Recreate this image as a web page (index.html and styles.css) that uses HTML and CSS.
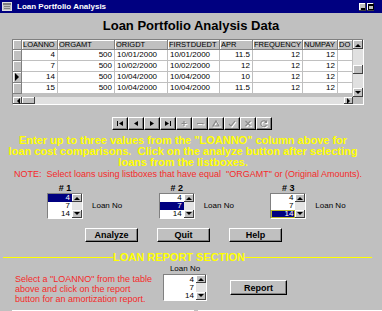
FILE: index.html
```html
<!DOCTYPE html>
<html lang="en">
<head>
    <meta charset="UTF-8">
    <meta name="viewport" content="width=device-width, initial-scale=1.0">
    <title>Loan Portfolio Analysis</title>
    <link rel="stylesheet" href="styles.css">
</head>
<body>
<div class="window">
    <div class="titlebar">
        <svg class="app-icon" width="10" height="9" viewBox="0 0 10 9">
            <rect x="0.5" y="0.5" width="9" height="8" fill="#c0c0c0" stroke="#e0e0e0"/>
            <rect x="1" y="1" width="8" height="2" fill="#808080"/>
            <rect x="2" y="4" width="6" height="1" fill="#808080"/>
            <rect x="2" y="6" width="6" height="1" fill="#808080"/>
        </svg>
        <span class="title-text">Loan Portfolio Analysis</span>
        <div class="title-buttons">
            <span class="title-btn"><svg width="6" height="6" viewBox="0 0 6 6"><rect x="1" y="4" width="4" height="2" fill="#000"/></svg></span>
            <span class="title-btn"><svg width="6" height="6" viewBox="0 0 6 6"><rect x="0.5" y="0.5" width="5" height="5" fill="none" stroke="#000"/><rect x="0" y="0" width="6" height="2" fill="#000"/></svg></span>
        </div>
    </div>

    <h1 class="heading">Loan Portfolio Analysis Data</h1>

    <div class="grid">
        <div class="cells">
            <div class="row head">
                <span class="ind"></span><span>LOANNO</span><span>ORGAMT</span><span>ORIGDT</span><span>FIRSTDUEDT</span><span>APR</span><span>FREQUENCY</span><span>NUMPAY</span><span>DO</span>
            </div>
            <div class="row">
                <span class="ind"></span><span class="num">4</span><span class="num">500</span><span>10/01/2000</span><span>10/01/2000</span><span class="num">11.5</span><span class="num">12</span><span class="num">12</span><span></span>
            </div>
            <div class="row">
                <span class="ind"></span><span class="num">7</span><span class="num">500</span><span>10/02/2000</span><span>10/02/2000</span><span class="num">12</span><span class="num">12</span><span class="num">12</span><span></span>
            </div>
            <div class="row">
                <span class="ind"><svg width="6" height="8" viewBox="0 0 6 8"><polygon points="1,0 5,4 1,8" fill="#000"/></svg></span><span class="num">14</span><span class="num">500</span><span>10/04/2000</span><span>10/04/2000</span><span class="num">10</span><span class="num">12</span><span class="num">12</span><span></span>
            </div>
            <div class="row">
                <span class="ind"></span><span class="num">15</span><span class="num">500</span><span>10/04/2000</span><span>10/04/2000</span><span class="num">11.5</span><span class="num">12</span><span class="num">12</span><span></span>
            </div>
        </div>
        <div class="vscroll">
            <span class="sbtn"><svg width="6" height="4" viewBox="0 0 6 4"><polygon points="0,4 3,1 6,4" fill="#000"/></svg></span>
            <span class="track" style="height: 16px"></span>
            <span class="sbtn thumb"></span>
            <span class="track" style="height: 14px"></span>
            <span class="sbtn"><svg width="6" height="4" viewBox="0 0 6 4"><polygon points="0,0 3,3 6,0" fill="#000"/></svg></span>
        </div>
        <div class="hscroll">
            <span class="sbtn"><svg width="4" height="6" viewBox="0 0 4 6"><polygon points="4,0 1,3 4,6" fill="#000"/></svg></span>
            <span class="sbtn thumb"></span>
            <span class="track"></span>
            <span class="sbtn"><svg width="4" height="6" viewBox="0 0 4 6"><polygon points="0,0 3,3 0,6" fill="#000"/></svg></span>
        </div>
        <div class="corner"></div>
    </div>

    <div class="navigator">
        <span class="nav-btn"><svg width="10" height="9" viewBox="0 0 10 9"><rect x="2" y="2" width="1" height="5" fill="#000"/><polygon points="8,2 8,7 4,4.5" fill="#000"/></svg></span>
        <span class="nav-btn"><svg width="10" height="9" viewBox="0 0 10 9"><polygon points="7,2 7,7 3,4.5" fill="#000"/></svg></span>
        <span class="nav-btn"><svg width="10" height="9" viewBox="0 0 10 9"><polygon points="3,2 3,7 7,4.5" fill="#000"/></svg></span>
        <span class="nav-btn"><svg width="10" height="9" viewBox="0 0 10 9"><polygon points="2,2 2,7 6,4.5" fill="#000"/><rect x="7" y="2" width="1" height="5" fill="#000"/></svg></span>
        <span class="nav-btn off"><svg width="10" height="9" viewBox="0 0 10 9"><g class="hi"><path d="M5 2v5M2.5 4.5h5"/></g><g class="lo"><path d="M5 2v5M2.5 4.5h5"/></g></svg></span>
        <span class="nav-btn off"><svg width="10" height="9" viewBox="0 0 10 9"><g class="hi"><path d="M2 4.5h6v1"/></g><g class="lo"><path d="M2 4.5h6v1"/></g></svg></span>
        <span class="nav-btn off"><svg width="10" height="9" viewBox="0 0 10 9"><g class="hi"><path d="M2 7h6L5 2z"/></g><g class="lo"><path d="M2 7h6L5 2z"/></g></svg></span>
        <span class="nav-btn off"><svg width="10" height="9" viewBox="0 0 10 9"><g class="hi"><path d="M2 5l2 2 4-5"/></g><g class="lo"><path d="M2 5l2 2 4-5"/></g></svg></span>
        <span class="nav-btn off"><svg width="10" height="9" viewBox="0 0 10 9"><g class="hi"><path d="M2.5 2l5 5M7.5 2l-5 5"/></g><g class="lo"><path d="M2.5 2l5 5M7.5 2l-5 5"/></g></svg></span>
        <span class="nav-btn off"><svg width="10" height="9" viewBox="0 0 10 9"><g class="hi"><path d="M7.5 3.5A3 3 0 1 0 7.5 6M7.5 1.5v2h-2"/></g><g class="lo"><path d="M7.5 3.5A3 3 0 1 0 7.5 6M7.5 1.5v2h-2"/></g></svg></span>
    </div>

    <p class="intro">Enter up to three values from the "LOANNO" column above for<br>loan cost comparisons.&nbsp; Click on the analyze button after selecting<br>loans from the listboxes.</p>
    <p class="note">NOTE:&nbsp; Select loans using listboxes that have equal&nbsp; "ORGAMT" or (Original Amounts).</p>

    <div class="pickers">
        <div class="picker">
            <div class="picker-col">
                <span class="picker-label"># 1</span>
                <div class="listbox">
                    <ul class="items"><li class="sel">4</li><li>7</li><li>14</li></ul>
                    <div class="lb-scroll">
                        <span class="sbtn"><svg width="6" height="4" viewBox="0 0 6 4"><polygon points="0,4 3,1 6,4" fill="#000"/></svg></span>
                        <span class="sbtn"><svg width="6" height="4" viewBox="0 0 6 4"><polygon points="0,0 3,3 6,0" fill="#000"/></svg></span>
                    </div>
                </div>
            </div>
            <span class="loan-no">Loan No</span>
        </div>
        <div class="picker">
            <div class="picker-col">
                <span class="picker-label"># 2</span>
                <div class="listbox">
                    <ul class="items"><li>4</li><li class="sel">7</li><li>14</li></ul>
                    <div class="lb-scroll">
                        <span class="sbtn"><svg width="6" height="4" viewBox="0 0 6 4"><polygon points="0,4 3,1 6,4" fill="#000"/></svg></span>
                        <span class="sbtn"><svg width="6" height="4" viewBox="0 0 6 4"><polygon points="0,0 3,3 6,0" fill="#000"/></svg></span>
                    </div>
                </div>
            </div>
            <span class="loan-no">Loan No</span>
        </div>
        <div class="picker">
            <div class="picker-col">
                <span class="picker-label"># 3</span>
                <div class="listbox">
                    <ul class="items"><li>4</li><li>7</li><li class="sel focus">14</li></ul>
                    <div class="lb-scroll">
                        <span class="sbtn"><svg width="6" height="4" viewBox="0 0 6 4"><polygon points="0,4 3,1 6,4" fill="#000"/></svg></span>
                        <span class="sbtn"><svg width="6" height="4" viewBox="0 0 6 4"><polygon points="0,0 3,3 6,0" fill="#000"/></svg></span>
                    </div>
                </div>
            </div>
            <span class="loan-no">Loan No</span>
        </div>
    </div>

    <div class="actions">
        <button class="btn">Analyze</button>
        <button class="btn">Quit</button>
        <button class="btn">Help</button>
    </div>

    <div class="section-rule">
        <span class="rule-left"></span>
        <span class="rule-text">LOAN REPORT SECTION</span>
        <span class="rule-right"></span>
    </div>

    <div class="report">
        <p class="report-text">Select a "LOANNO" from the table<br>above and click on the report<br>button for an amortization report.</p>
        <div class="report-pick">
            <span class="report-label">Loan No</span>
            <div class="listbox wide">
                <ul class="items"><li>4</li><li>7</li><li>14</li></ul>
                <div class="lb-scroll">
                    <span class="sbtn"><svg width="6" height="4" viewBox="0 0 6 4"><polygon points="0,4 3,1 6,4" fill="#000"/></svg></span>
                    <span class="sbtn"><svg width="6" height="4" viewBox="0 0 6 4"><polygon points="0,0 3,3 6,0" fill="#000"/></svg></span>
                </div>
            </div>
        </div>
        <button class="btn btn-report">Report</button>
    </div>

    <div class="panels">
        <div class="panel panel-left"></div>
        <div class="panel panel-right"></div>
    </div>
</div>
</body>
</html>
```

FILE: styles.css
```css
/* Win95 style form */
body {
    margin: 0;
    padding: 0;
    background-color: #c0c0c0;
    font-family: "Liberation Sans", Arial, sans-serif;
    overflow: hidden;
}

.window {
    width: 382px;
    height: 311px;
    overflow: hidden;
}

p {
    margin: 0;
}

/* title bar */
.titlebar {
    height: 13px;
    background-color: #000080;
    display: flex;
    align-items: center;
    padding-left: 2px;
}

.app-icon {
    display: block;
}

.title-text {
    color: #fff;
    font-weight: bold;
    font-size: 8px;
    margin-left: 5px;
}

.title-buttons {
    margin-left: auto;
    margin-right: 8px;
    display: flex;
    gap: 1px;
}

.title-btn {
    width: 7px;
    height: 8px;
    background-color: #c0c0c0;
    display: flex;
    align-items: center;
    justify-content: center;
    box-shadow: inset -1px -1px #404040, inset 1px 1px #fff;
}

.heading {
    margin: 0;
    height: 26px;
    line-height: 26px;
    font-size: 13px;
    text-align: center;
    color: #000;
}

/* data grid */
.grid {
    margin-left: 12px;
    width: 352px;
    height: 66px;
    box-sizing: border-box;
    border: 1px solid;
    border-color: #808080 #fff #fff #808080;
    display: grid;
    grid-template-columns: 340px 10px;
    grid-template-rows: 57px 7px;
    background-color: #c0c0c0;
}

.cells {
    overflow: hidden;
}

.row {
    display: grid;
    grid-template-columns: 9px 36px 57px 53px 52px 33px 50px 35px 15px;
    height: 11px;
}

.row span {
    box-sizing: border-box;
    background-color: #fff;
    border-right: 1px solid #c0c0c0;
    border-bottom: 1px solid #c0c0c0;
    padding: 0 2px;
    font-size: 8px;
    line-height: 10px;
    white-space: nowrap;
    overflow: hidden;
    color: #000;
}

.row .num {
    text-align: right;
}

.row.head {
    height: 10px;
}

.row.head span,
.row .ind {
    background-color: #c0c0c0;
    border-right-color: #808080;
    border-bottom-color: #808080;
    box-shadow: inset 1px 1px #fff;
}

.row.head span {
    font-size: 7.5px;
    line-height: 10px;
    padding: 0 0 0 1px;
}

.row .ind {
    padding: 0;
    display: flex;
    align-items: center;
    justify-content: center;
}

.vscroll {
    display: flex;
    flex-direction: column;
}

.hscroll {
    display: flex;
}

.track {
    background-color: #e0e0e0;
}

.hscroll .track {
    flex: 1;
}

.sbtn {
    box-sizing: border-box;
    background-color: #c0c0c0;
    box-shadow: inset -1px -1px #404040, inset 1px 1px #fff;
    display: flex;
    align-items: center;
    justify-content: center;
}

.vscroll .sbtn {
    height: 9px;
}

.hscroll .sbtn {
    width: 9px;
}

.hscroll .thumb {
    width: 13px;
}

.corner {
    background-color: #c0c0c0;
}

/* record navigator */
.navigator {
    margin-top: 12px;
    display: flex;
    justify-content: center;
    padding-left: 2px;
}

.nav-btn {
    width: 16px;
    height: 13px;
    box-sizing: border-box;
    background-color: #c0c0c0;
    border: 1px solid;
    border-color: #fff #000 #000 #fff;
    box-shadow: inset -1px -1px #808080;
    display: flex;
    align-items: center;
    justify-content: center;
}

.nav-btn .hi,
.nav-btn .lo {
    fill: none;
    stroke-width: 1.2;
}

.nav-btn .hi {
    stroke: #fff;
    transform: translate(1px, 1px);
}

.nav-btn .lo {
    stroke: #8a8a8a;
}

/* instructions */
.intro {
    margin-top: 5px;
    width: 366px;
    text-align: center;
    color: #ffff00;
    font-weight: bold;
    font-size: 11px;
    line-height: 11px;
    white-space: nowrap;
}

.note {
    margin-top: 1px;
    padding-left: 14px;
    color: #f52a2a;
    font-size: 9px;
    line-height: 10px;
    white-space: nowrap;
}

/* loan pickers */
.pickers {
    margin-top: 4px;
    padding-left: 47px;
    display: flex;
}

.picker {
    width: 119px;
    display: flex;
    align-items: flex-end;
}

.picker-col {
    display: flex;
    flex-direction: column;
    align-items: center;
}

.picker-label {
    font-weight: bold;
    font-size: 9px;
    line-height: 10px;
}

.loan-no {
    font-size: 8px;
    line-height: 26px;
    margin-left: 9px;
}

.listbox {
    width: 36px;
    height: 26px;
    box-sizing: border-box;
    border: 1px solid;
    border-color: #808080 #fff #fff #808080;
    background-color: #fff;
    display: flex;
}

.items {
    list-style: none;
    margin: 0;
    padding: 0;
    flex: 1;
}

.items li {
    font-size: 8px;
    line-height: 8px;
    height: 8px;
    text-align: right;
    padding-right: 2px;
}

.items li.sel {
    background-color: #000080;
    color: #fff;
}

.items li.focus {
    box-shadow: inset 0 0 0 1px #b8b830;
}

.lb-scroll {
    width: 10px;
    background-color: #e4e4e4;
    display: flex;
    flex-direction: column;
    justify-content: space-between;
}

.lb-scroll .sbtn {
    height: 8px;
}

/* buttons */
.actions {
    margin-top: 9px;
    padding-left: 85px;
    display: flex;
    gap: 19px;
}

.btn {
    width: 53px;
    height: 14px;
    padding: 0;
    box-sizing: border-box;
    background-color: #c0c0c0;
    border: 1px solid;
    border-color: #fff #000 #000 #fff;
    box-shadow: inset -1px -1px #808080;
    font-family: "Liberation Sans", Arial, sans-serif;
    font-weight: bold;
    font-size: 9px;
    color: #000;
}

/* report section */
.section-rule {
    margin-top: 10px;
    display: flex;
    align-items: center;
    padding: 0 10px 0 3px;
}

.rule-left,
.rule-right {
    height: 1px;
    background-color: #ffff00;
}

.rule-left {
    width: 110px;
}

.rule-right {
    flex: 1;
}

.rule-text {
    color: #ffff00;
    font-weight: bold;
    font-size: 11px;
    line-height: 11px;
}

.report {
    margin-top: 1px;
    display: flex;
    align-items: flex-start;
}

.report-text {
    width: 148px;
    margin-top: 10px;
    padding-left: 15px;
    color: #f52a2a;
    font-size: 9px;
    line-height: 10px;
    white-space: nowrap;
}

.report-pick {
    display: flex;
    flex-direction: column;
    align-items: center;
}

.report-label {
    font-size: 8px;
    line-height: 10px;
}

.listbox.wide {
    width: 44px;
    height: 27px;
}

.listbox.wide .items {
    padding-top: 1px;
}

.btn-report {
    margin-top: 16px;
    margin-left: 23px;
    width: 57px;
    height: 15px;
}

.panels {
    margin-top: 6px;
    display: flex;
    gap: 4px;
    padding-left: 12px;
}

.panel {
    height: 6px;
    border-top: 1px solid #fff;
    border-left: 1px solid #fff;
}

.panel-left {
    width: 181px;
}

.panel-right {
    flex: 1;
}
```
